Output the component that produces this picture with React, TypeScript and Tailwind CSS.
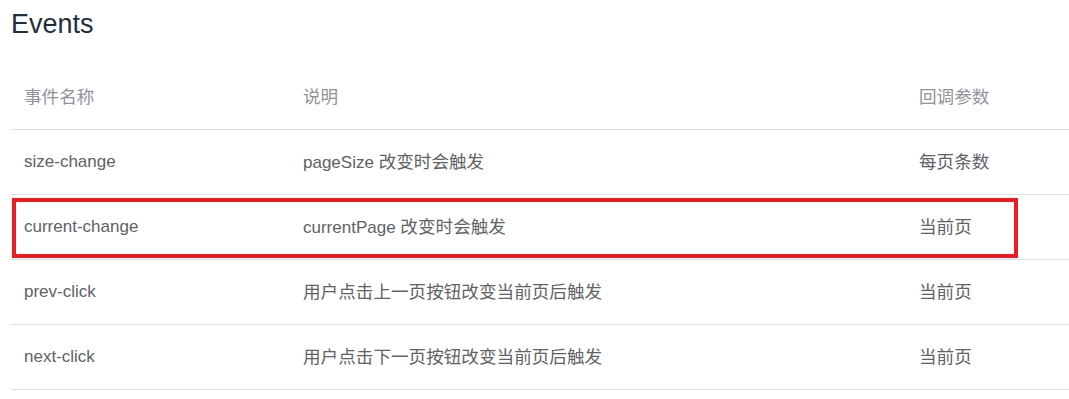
const rows = [
  { name: 'size-change', pre: 'pageSize ', desc: '改变时会触发', arg: '每页条数' },
  { name: 'current-change', pre: 'currentPage ', desc: '改变时会触发', arg: '当前页', marked: true },
  { name: 'prev-click', pre: '', desc: '用户点击上一页按钮改变当前页后触发', arg: '当前页' },
  { name: 'next-click', pre: '', desc: '用户点击下一页按钮改变当前页后触发', arg: '当前页' },
];

const font = { fontFamily: '"Liberation Sans", Arial, "Noto Sans CJK SC", sans-serif' };

export default function App() {
  return (
    <div className="w-[1069px] h-[399px] bg-white overflow-hidden pl-[11px]" style={font}>
      {/* title */}
      <h3 className="h-[65px] pt-[11px] text-[27px] leading-[27px] text-[#1f2f3d] font-normal">Events</h3>

      {/* table */}
      <div className="text-[17px] leading-[24px]">
        <div className="grid grid-cols-[279px_616px_1fr] h-[65px] items-center border-b border-[#dcdfe6] text-[#909399]">
          <div className="pl-[13px] text-[17.6px]">事件名称</div>
          <div className="pl-[13px] text-[17.6px]">说明</div>
          <div className="pl-[13px] text-[17.6px]">回调参数</div>
        </div>
        {rows.map((r) => (
          <div
            key={r.name}
            className="relative grid grid-cols-[279px_616px_1fr] h-[65px] items-center border-b border-[#dcdfe6] text-[#606266]"
          >
            <div className="pl-[13px]">{r.name}</div>
            <div className="pl-[13px]">
              {r.pre}
              <span className="text-[17.6px]">{r.desc}</span>
            </div>
            <div className="pl-[13px] text-[17.6px]">{r.arg}</div>
            {r.marked && (
              <div className="absolute left-[1px] top-[3px] w-[1006px] h-[60px] border-[4px] border-[#ed1c24]" />
            )}
          </div>
        ))}
      </div>
    </div>
  );
}
